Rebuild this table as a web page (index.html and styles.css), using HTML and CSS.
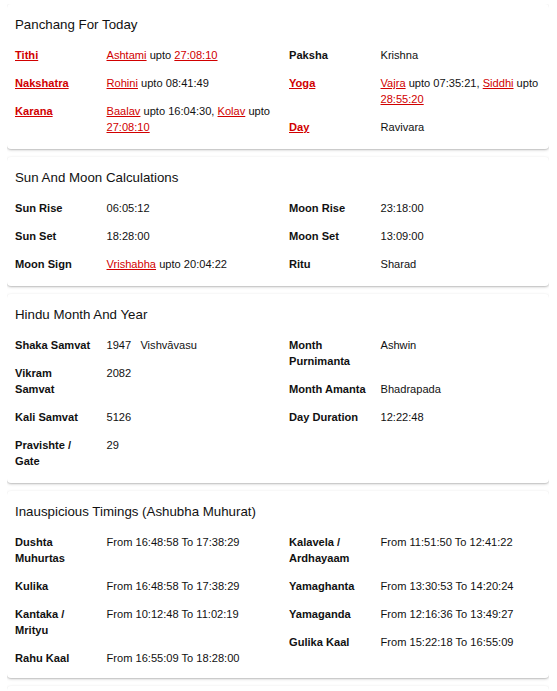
FILE: index.html
```html
<!DOCTYPE html>
<html>
<head>
<meta charset="utf-8">
<link rel="stylesheet" href="styles.css">
</head>
<body>
<div class="card">
  <h2 class="card-title">Panchang For Today</h2>
  <div class="halves">
    <div class="list">
      <div class="row"><span class="label"><a href="#">Tithi</a></span><span class="value"><a href="#">Ashtami</a> upto <a href="#">27:08:10</a></span></div>
      <div class="row"><span class="label"><a href="#">Nakshatra</a></span><span class="value"><a href="#">Rohini</a> upto 08:41:49</span></div>
      <div class="row"><span class="label"><a href="#">Karana</a></span><span class="value"><a href="#">Baalav</a> upto 16:04:30, <a href="#">Kolav</a> upto <a href="#">27:08:10</a></span></div>
    </div>
    <div class="list">
      <div class="row"><span class="label">Paksha</span><span class="value">Krishna</span></div>
      <div class="row"><span class="label"><a href="#">Yoga</a></span><span class="value"><a href="#">Vajra</a> upto 07:35:21, <a href="#">Siddhi</a> upto <a href="#">28:55:20</a></span></div>
      <div class="row"><span class="label"><a href="#">Day</a></span><span class="value">Ravivara</span></div>
    </div>
  </div>
</div>

<div class="card">
  <h2 class="card-title">Sun And Moon Calculations</h2>
  <div class="halves">
    <div class="list">
      <div class="row"><span class="label">Sun Rise</span><span class="value">06:05:12</span></div>
      <div class="row"><span class="label">Sun Set</span><span class="value">18:28:00</span></div>
      <div class="row"><span class="label">Moon Sign</span><span class="value"><a href="#">Vrishabha</a> upto 20:04:22</span></div>
    </div>
    <div class="list">
      <div class="row"><span class="label">Moon Rise</span><span class="value">23:18:00</span></div>
      <div class="row"><span class="label">Moon Set</span><span class="value">13:09:00</span></div>
      <div class="row"><span class="label">Ritu</span><span class="value">Sharad</span></div>
    </div>
  </div>
</div>

<div class="card">
  <h2 class="card-title">Hindu Month And Year</h2>
  <div class="halves">
    <div class="list">
      <div class="row"><span class="label">Shaka Samvat</span><span class="value">1947 &nbsp; Vishvāvasu</span></div>
      <div class="row"><span class="label">Vikram Samvat</span><span class="value">2082</span></div>
      <div class="row"><span class="label">Kali Samvat</span><span class="value">5126</span></div>
      <div class="row"><span class="label">Pravishte / Gate</span><span class="value">29</span></div>
    </div>
    <div class="list">
      <div class="row"><span class="label">Month Purnimanta</span><span class="value">Ashwin</span></div>
      <div class="row"><span class="label">Month Amanta</span><span class="value">Bhadrapada</span></div>
      <div class="row"><span class="label">Day Duration</span><span class="value">12:22:48</span></div>
    </div>
  </div>
</div>

<div class="card card-last">
  <h2 class="card-title">Inauspicious Timings (Ashubha Muhurat)</h2>
  <div class="halves">
    <div class="list">
      <div class="row"><span class="label">Dushta Muhurtas</span><span class="value">From 16:48:58 To 17:38:29</span></div>
      <div class="row"><span class="label">Kulika</span><span class="value">From 16:48:58 To 17:38:29</span></div>
      <div class="row"><span class="label">Kantaka / Mrityu</span><span class="value">From 10:12:48 To 11:02:19</span></div>
      <div class="row"><span class="label">Rahu Kaal</span><span class="value">From 16:55:09 To 18:28:00</span></div>
    </div>
    <div class="list">
      <div class="row"><span class="label">Kalavela / Ardhayaam</span><span class="value">From 11:51:50 To 12:41:22</span></div>
      <div class="row"><span class="label">Yamaghanta</span><span class="value">From 13:30:53 To 14:20:24</span></div>
      <div class="row"><span class="label">Yamaganda</span><span class="value">From 12:16:36 To 13:49:27</span></div>
      <div class="row"><span class="label">Gulika Kaal</span><span class="value">From 15:22:18 To 16:55:09</span></div>
    </div>
  </div>
</div>

<div class="card card-next"></div>
</body>
</html>
```
FILE: styles.css
```css
html, body {
  background: #ffffff;
}
body {
  margin: 4px 8px 0 7px;
  font-family: "Liberation Sans", Arial, Helvetica, sans-serif;
  color: #111;
  font-size: 11.1px;
  line-height: 16px;
}
.card {
  background: #fff;
  border-radius: 4px;
  box-shadow: 0 1px 3px rgba(0, 0, 0, 0.22), 0 1px 1px rgba(0, 0, 0, 0.08);
  padding: 13px 6px 8px 8px;
  margin-bottom: 8px;
}
.card-last {
  padding-bottom: 6px;
}
.card-next {
  height: 60px;
  padding: 0;
}
.card-title {
  margin: 0 0 8px 0;
  font-size: 13.3px;
  font-weight: normal;
  line-height: 16px;
  color: #111;
}
.halves {
  display: grid;
  grid-template-columns: 274px 1fr;
}
.row {
  display: grid;
  grid-template-columns: 91.5px 1fr;
  padding: 6px 0;
}
.label {
  font-weight: bold;
  padding-right: 13px;
}
.value {
  font-weight: normal;
}
a {
  color: #d10000;
  text-decoration: underline;
}
```
